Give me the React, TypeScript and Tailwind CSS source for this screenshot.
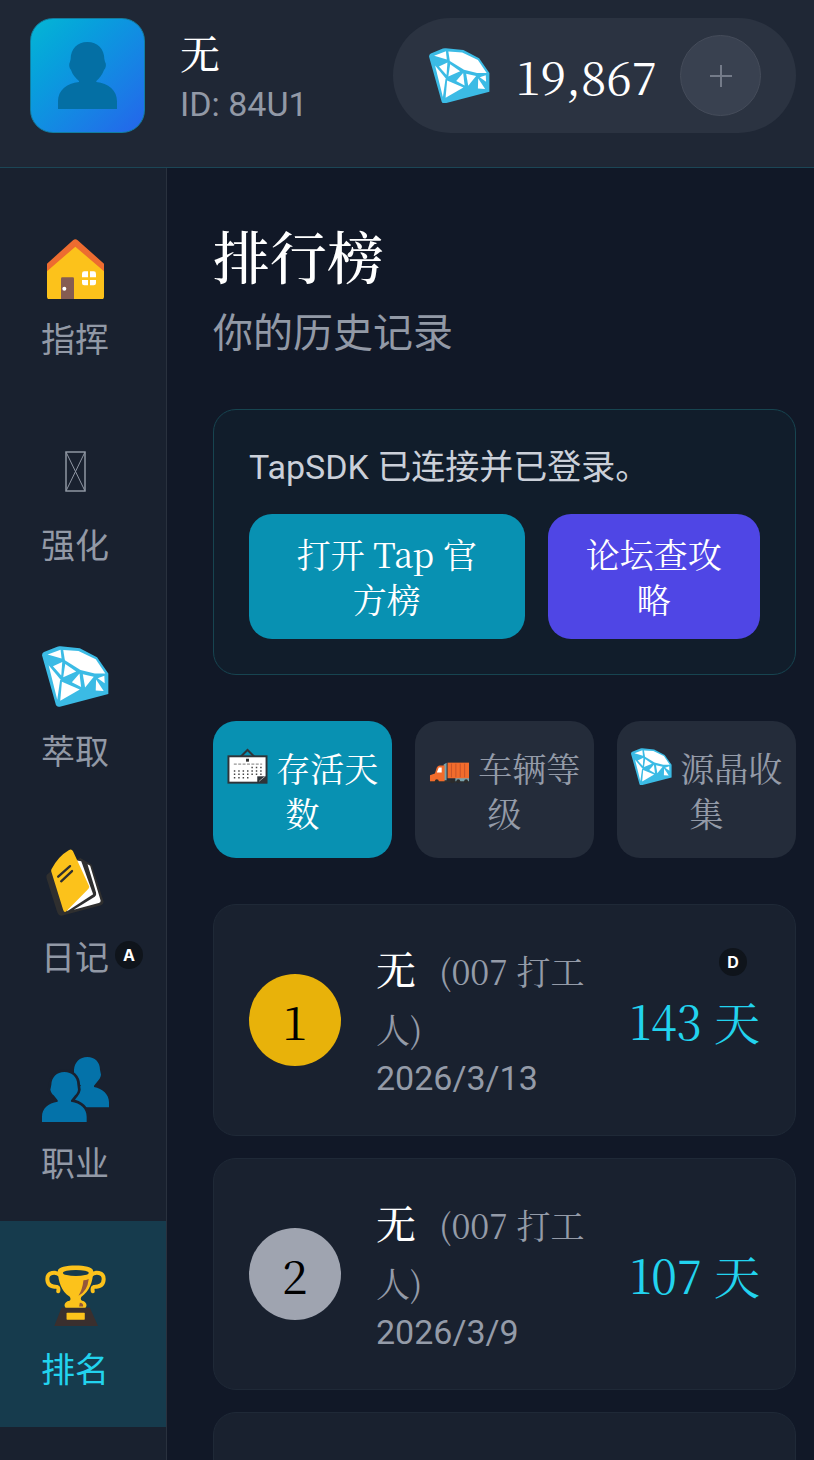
import React from "react";

const serif =
  "font-['Noto_Serif_CJK_SC','Noto_Serif_SC','Liberation_Serif','Noto_Sans_CJK_SC',serif]";
const sans = "font-[Roboto,'Noto_Sans_CJK_SC',sans-serif]";

type IconProps = { className?: string };

const GemIcon = ({ className }: IconProps) => (
  <svg viewBox="126 80 202 184" className={className} aria-hidden="true">
    <path
      d="M126 108Q126 101 132 98L172 82Q176 80 182 81L240 87L292 114L326 163V225L180 263Q171 265 168 258Z"
      fill="#3bbbe5"
    />
    <g fill="#fff">
      <path d="M143 106L182 91L185 118Z" />
      <path d="M190 92L236 95L288 120L317 163L285 163L242 152L195 123Z" />
      <path d="M159 141L187 128L184 169Z" />
      <path d="M196 134L229 157L190 174Z" />
      <path d="M146 138L181 180L172 242Z" />
      <path d="M186 188L240 211L181 245Z" />
      <path d="M216 189L239 163L244 204Z" />
      <path d="M249 165L282 173L256 205Z" />
      <path d="M294 177L314 170L315 192Z" />
      <path d="M289 181L312 216L288 214Z" />
    </g>
  </svg>
);

const HouseIcon = ({ className }: IconProps) => (
  <svg viewBox="141 56 171 181" className={className} aria-hidden="true">
    <path d="M141 150L226 74L312 150V229Q312 237 304 237H149Q141 237 141 229Z" fill="#fcc21b" />
    <path d="M141 130L219 60Q226 54 233 60L312 130V153L226 79L141 153Z" fill="#ed6c30" />
    <path d="M183 237V175Q183 171 187 171H218Q222 171 222 175V237Z" fill="#855c52" />
    <circle cx="193" cy="205" r="6" fill="#fff" />
    <g fill="#fff">
      <path d="M264 171H246V160Q246 153 253 153H264Z" />
      <path d="M270 171H288V160Q288 153 281 153H270Z" />
      <path d="M264 179H246V188Q246 195 253 195H264Z" />
      <path d="M270 179H288V188Q288 195 281 195H270Z" />
    </g>
  </svg>
);

const MissingIcon = ({ className }: IconProps) => (
  <svg viewBox="0 0 21 41" className={className} fill="none" stroke="#8f96a3" aria-hidden="true">
    <path d="M1 1H20V40H1Z" strokeWidth="1.5" />
    <path d="M1 1L20 40M20 1L1 40" strokeWidth="1" />
  </svg>
);

const NotebookIcon = ({ className }: IconProps) => (
  <svg viewBox="136 685 176 204" className={className} aria-hidden="true">
    <path d="M152 752L138 764Q136 770 139 778L170 876Q174 889 186 887L303 856Q313 851 310 842L274 732L240 712Z" fill="#2f2f2f" />
    <path d="M230 720L243 722L279 822L200 874Z" fill="#fff" />
    <path d="M262 731L270 736L302 842Q302 847 296 849L220 869L284 830Q290 826 288 818Z" fill="#fff" />
    <path d="M153 746Q172 708 206 688Q214 684 218 692L267 798Q268 804 262 809L197 875Q191 879 188 869L152 753Q151 750 153 746Z" fill="#fcc21b" />
    <path d="M173 769L209 737M182 783L215 752" fill="none" stroke="#2f2f2f" strokeWidth="7" strokeLinecap="round" />
  </svg>
);

const PeopleIcon = ({ className }: IconProps) => (
  <svg viewBox="126 83 201 195" className={className} aria-hidden="true">
    <path
      d="M262 83C285 83 300 99 300 121L303 136C302 145 297 150 294 154L282 169V173C308 178 327 195 327 219V234H205V175L243 170L230 150L222 136V121C224 99 239 83 262 83Z"
      fill="#0472a9"
    />
    <path
      d="M193 128C216 128 232 144 232 166L234 181C233 190 228 194 225 198L213 213V217C242 221 260 238 260 262V278H126V262C126 238 144 221 173 217V213L161 198C157 194 153 190 151 181L154 166C155 144 170 128 193 128Z"
      fill="#0472a9"
      stroke="#19212f"
      strokeWidth="16"
      paintOrder="stroke"
    />
  </svg>
);

const PersonIcon = ({ className }: IconProps) => (
  <svg viewBox="174 125 177 201" className={className} aria-hidden="true">
    <path
      d="M262 125C293 125 313 147 313 176L315 184C320 192 318 202 312 209C306 224 299 233 289 242V245C325 249 351 270 351 303V326H174V303C174 270 200 249 237 245V242C227 233 218 224 213 209C207 202 206 192 210 184L212 176C212 147 232 125 262 125Z"
      fill="#046fa4"
    />
  </svg>
);

const TrophyIcon = ({ className }: IconProps) => (
  <svg viewBox="134 704 184 184" className={className} aria-hidden="true">
    <path d="M184 832H269L294 888H162Z" fill="#3a2f2e" />
    <path
      d="M180 735C166 722 141 726 141 746C141 768 160 770 170 770Q176 772 174 783M272 735C286 722 311 726 311 746C311 768 292 770 282 770Q276 772 278 783"
      fill="none"
      stroke="#fcc21b"
      strokeWidth="12"
      strokeLinecap="round"
    />
    <path d="M173 721C173 700 279 700 279 721C280 752 268 784 244 800Q239 807 246 812C258 814 263 826 256 833H196C189 826 194 814 208 812Q214 807 208 799C184 784 173 752 173 721Z" fill="#fcc21b" />
    <ellipse cx="227" cy="728" rx="39" ry="9" fill="#163b4d" />
    <path d="M250 750Q258 750 266 746Q262 783 235 797Q247 778 250 750ZM239 818Q250 818 249 829H237Z" fill="#94573b" />
    <rect x="199" y="848" width="55" height="21" rx="2" fill="#fcc21b" />
  </svg>
);

const CalendarIcon = ({ className }: IconProps) => (
  <svg viewBox="0 0 42 38" className={className} aria-hidden="true">
    <path d="M14 9L21 2L28 9" fill="none" stroke="#2f3439" strokeWidth="2" />
    <rect x="1.5" y="8.5" width="39" height="27" fill="#fff" stroke="#2f3439" strokeWidth="2" />
    <rect x="19.5" y="11" width="3" height="3" fill="#2f2f2f" />
    <path d="M7 16.5H36" stroke="#777" strokeWidth="1" strokeDasharray="3 1.5" />
    <path d="M25 20H36M7 23.5H36M7 27H36M7 30.5H22" stroke="#444" strokeWidth="1.5" strokeDasharray="1.5 3" />
    <path d="M31 36V29H41V36Z" fill="#2f3439" />
    <path d="M33 34L39 29" stroke="#aaa" strokeWidth="1" />
  </svg>
);

const TruckIcon = ({ className }: IconProps) => (
  <svg viewBox="0 0 42 38" className={className} aria-hidden="true">
    <path d="M1 33H41V35H1Z" fill="#2f2f2f" />
    <path d="M15 17L18 15V33H15ZM27 30H41V34H27Z" fill="#78a3ad" />
    <path d="M1 34V28L6 26L8 20Q9 18 11 18H16V34Z" fill="#f26c2c" />
    <path d="M8 25L10 20H13V25Z" fill="#fff" />
    <path d="M19 15H41V31H19Z" fill="#f26c2c" />
    <path d="M23 16V30M27.5 16V30M32 16V30M36.5 16V30" stroke="#c9532a" strokeWidth="1" />
    <g fill="#2b2b2b">
      <circle cx="8" cy="34" r="2" />
      <circle cx="24" cy="34" r="2" />
      <circle cx="30" cy="34" r="2" />
      <circle cx="38" cy="34" r="2" />
    </g>
  </svg>
);

const KeyHint = ({ label, className }: { label: string; className: string }) => (
  <span
    className={`absolute flex size-7 items-center justify-center rounded-full bg-[#0f141b] font-[Inter,sans-serif] text-base font-bold text-white ${className}`}
  >
    {label}
  </span>
);

const navItems = [
  { label: "指挥", icon: <HouseIcon className="mt-2 w-[57px]" /> },
  { label: "强化", icon: <MissingIcon className="w-[21px]" /> },
  { label: "萃取", icon: <GemIcon className="w-[67px]" /> },
  { label: "日记", icon: <NotebookIcon className="w-[58px]" />, hint: "A" },
  { label: "职业", icon: <PeopleIcon className="w-[67px]" /> },
  { label: "排名", icon: <TrophyIcon className="w-[61px]" />, active: true },
];

const tabs = [
  { label: "存活天数", icon: CalendarIcon, active: true },
  { label: "车辆等级", icon: TruckIcon },
  { label: "源晶收集", icon: GemIcon },
];

const records = [
  { rank: 1, name: "无", job: "(007 打工人)", date: "2026/3/13", days: 143, color: "bg-[#e8b20a]", hint: "D" },
  { rank: 2, name: "无", job: "(007 打工人)", date: "2026/3/9", days: 107, color: "bg-[#9fa4b0]" },
];

const Header = () => (
  <header className="flex h-[168px] shrink-0 items-start justify-between border-b border-[#1b4656] bg-[#1f2735] pt-[18px] pr-[18px] pl-[30px]">
    <div className="flex items-center gap-[35px]">
      <div className="flex size-[115px] items-center justify-center rounded-[23px] border border-[#137d9f] bg-linear-to-br from-[#06b6d4] to-[#2563eb]">
        <PersonIcon className="w-[59px]" />
      </div>
      <div className="pt-1">
        <div className={`${serif} text-[40px] leading-[50px] font-medium text-white`}>无</div>
        <div className={`${sans} mt-[2px] text-[34px] leading-[50px] text-[#9299a6]`}>ID: 84U1</div>
      </div>
    </div>
    <div className="flex h-[115px] items-center rounded-full bg-[#2b3341] pr-[35px] pl-[36px]">
      <GemIcon className="w-[61px]" />
      <span className={`${serif} mr-[23px] ml-[25px] text-[46px] text-white`}>19,867</span>
      <button
        aria-label="增加"
        className="flex size-[81px] items-center justify-center rounded-full border border-[#454c5a] bg-[#394150]"
      >
        <svg viewBox="0 0 22 22" className="size-[22px]" stroke="#747b89" strokeWidth="2" aria-hidden="true">
          <path d="M11 0V22M0 11H22" />
        </svg>
      </button>
    </div>
  </header>
);

const Sidebar = () => (
  <nav className="w-[167px] shrink-0 overflow-hidden border-r border-[#29313e] bg-[#19212f] pt-[23px]">
    {navItems.map((item) => (
      <button
        key={item.label}
        className={`relative flex w-full flex-col items-center gap-[14px] pt-9 pr-4 pb-[34px] ${
          item.active ? "bg-[#163b4d] text-[#22d3ee]" : "text-[#9299a6]"
        }`}
      >
        <span className="flex h-[76px] items-center">{item.icon}</span>
        <span className={`${sans} text-[34px] leading-[46px]`}>{item.label}</span>
        {item.hint && <KeyHint label={item.hint} className="top-[132px] left-[115px]" />}
      </button>
    ))}
  </nav>
);

const App = () => {
  return (
    <div className="flex h-screen flex-col overflow-hidden bg-[#111827]">
      <Header />
      <div className="flex min-h-0 flex-1">
        <Sidebar />
        <main className="min-w-0 flex-1 overflow-hidden pt-[46px] pr-[18px] pl-[46px]">
          <h1 className={`${serif} text-[57px] leading-[80px] font-medium text-white`}>排行榜</h1>
          <p className={`${sans} mt-[11px] text-[40px] leading-[58px] text-[#9299a6]`}>你的历史记录</p>

          {/* TapSDK status */}
          <section className="mt-[46px] rounded-[23px] border border-[#174450] bg-[#111d2b] p-[35px]">
            <p className={`${sans} text-[34px] leading-[45px] text-[#cbd0d9]`}>TapSDK 已连接并已登录。</p>
            <div className={`${serif} mt-6 flex gap-[23px] text-[34px] leading-[45px] text-white`}>
              <button className="flex-[276] rounded-[23px] bg-[#0891b2] px-[46px] pt-[17px] pb-[18px]">
                打开 Tap 官方榜
              </button>
              <button className="flex-[211] rounded-[23px] bg-[#4f46e5] px-[36px] pt-[17px] pb-[18px]">
                论坛查攻略
              </button>
            </div>
          </section>

          {/* Category tabs */}
          <div className="mt-[46px] grid grid-cols-3 gap-[23px]">
            {tabs.map(({ label, icon: Icon, active }) => (
              <button
                key={label}
                className={`${serif} rounded-[23px] px-3 pt-6 pb-[23px] text-[34px] leading-[45px] ${
                  active ? "bg-[#0891b2] text-white" : "bg-[#242c3a] text-[#949ba8]"
                }`}
              >
                <Icon className="inline w-[41px] align-[-3px]" /> {label}
              </button>
            ))}
          </div>

          {/* Run history */}
          <ol className="mt-[46px] flex flex-col gap-[22px]">
            {records.map((record) => (
              <li
                key={record.rank}
                className={`${serif} relative flex items-center gap-[35px] rounded-[23px] border border-[#1f2937] bg-[#19212f] px-[35px] py-[34px]`}
              >
                <div
                  className={`flex size-[92px] shrink-0 items-center justify-center rounded-full text-[46px] text-black ${record.color}`}
                >
                  {record.rank}
                </div>
                <div className="min-w-0 flex-1">
                  <div className="text-[40px] leading-[58px] font-medium text-white">
                    {record.name}
                    <span className="ml-[23px] text-[34px] leading-none font-normal text-[#949ba8]">
                      {record.job}
                    </span>
                  </div>
                  <div className={`${sans} text-[34px] leading-[46px] text-[#949ba8]`}>{record.date}</div>
                </div>
                <div className="shrink-0 text-[46px] text-[#22d3ee]">{record.days} 天</div>
                {record.hint && <KeyHint label={record.hint} className="top-[43px] right-[48px]" />}
              </li>
            ))}
            <li className="h-[232px] rounded-[23px] border border-[#1f2937] bg-[#19212f]" />
          </ol>
        </main>
      </div>
    </div>
  );
};

export default App;
